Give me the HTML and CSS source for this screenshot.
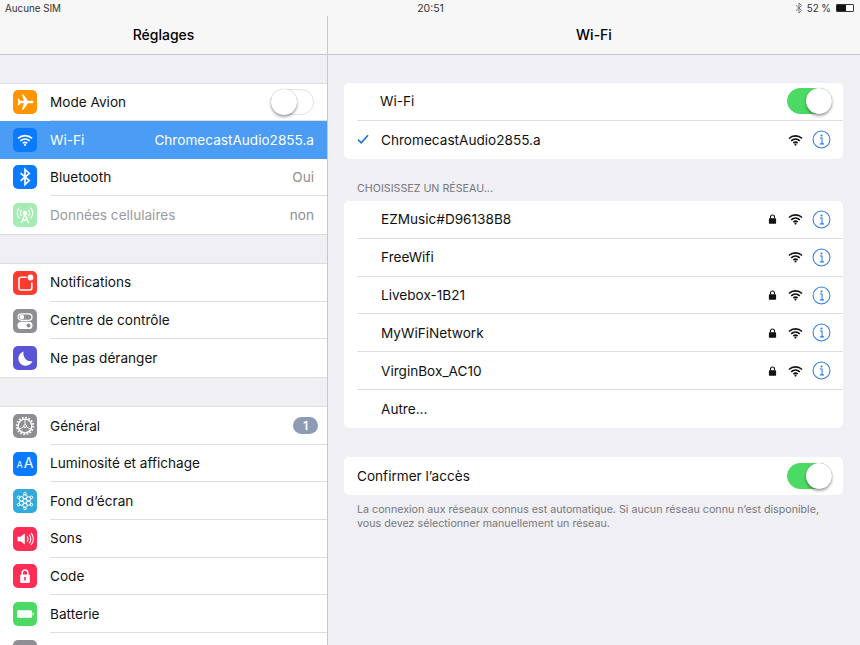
FILE: index.html
```html
<!DOCTYPE html>
<html lang="fr">
<head>
    <meta charset="UTF-8">
    <meta name="viewport" content="width=device-width, initial-scale=1.0">
    <title>Réglages</title>
    <link rel="stylesheet" href="styles.css">
</head>
<body>
    <svg class="defs" width="0" height="0">
        <symbol id="wifi" viewBox="0 0 16 12">
            <path d="M1 4.4C5 .7 11 .7 15 4.4M3.4 6.9c2.7-2.4 6.5-2.4 9.2 0M5.7 9.2c1.4-1.1 3.2-1.1 4.6 0" fill="none" stroke="currentColor" stroke-width="1.7"/>
            <circle cx="8" cy="10.9" r="1.1" fill="currentColor"/>
        </symbol>
        <symbol id="lock" viewBox="0 0 10 11">
            <path d="M2.8 5V3.2a2.2 2.2 0 0 1 4.4 0V5" fill="none" stroke="currentColor" stroke-width="1.2"/>
            <rect x="1" y="4.6" width="8" height="6.2" rx=".8" fill="currentColor"/>
        </symbol>
        <symbol id="info" viewBox="0 0 20 20">
            <circle cx="10" cy="10" r="8.9" fill="none" stroke="currentColor" stroke-width="1.1"/>
            <circle cx="10" cy="5.8" r="1.1" fill="currentColor"/>
            <path d="M8.3 8.5H10.6V14.3M8.3 14.6H12.6" fill="none" stroke="currentColor" stroke-width="1.1"/>
        </symbol>
    </svg>

    <div class="status">
        <span class="status-sim">Aucune SIM</span>
        <span class="status-time">20:51</span>
        <span class="status-right">
            <svg class="status-bt" viewBox="0 0 8 12"><path d="M1 3.3L6.6 8.4 4 11V1l2.6 2.6L1 8.7" fill="none" stroke="currentColor" stroke-width="1"/></svg>
            52 %
            <span class="battery"><span class="battery-fill"></span></span>
        </span>
    </div>

    <div class="panes">
        <aside class="sidebar">
            <header class="navbar">Réglages</header>

            <ul class="group">
                <li class="row">
                    <span class="icon orange">
                        <svg viewBox="0 0 24 24"><path d="M20.5 12c0-.9-1-1.3-2-1.3h-3.6L10.5 4.5H8.8l2.2 6.2H7.3L5.8 8.8H4.6l.8 3.2-.8 3.2h1.2l1.5-1.9H11l-2.2 6.2h1.7l4.4-6.2h3.6c1 0 2-.4 2-1.3z" fill="#fff"/></svg>
                    </span>
                    <div class="row-body">
                        <span class="label">Mode Avion</span>
                        <span class="toggle"><span class="knob"></span></span>
                    </div>
                </li>
                <li class="row selected">
                    <span class="icon blue">
                        <svg class="glyph-wifi" viewBox="0 0 16 12"><use href="#wifi"/></svg>
                    </span>
                    <div class="row-body">
                        <span class="label">Wi-Fi</span>
                        <span class="value">ChromecastAudio2855.a</span>
                    </div>
                </li>
                <li class="row">
                    <span class="icon blue">
                        <svg viewBox="0 0 24 24"><path d="M7.6 8.2L16.2 15.6 12 19.6V4.4L16.2 8.4 7.6 15.8" fill="none" stroke="#fff" stroke-width="1.7"/></svg>
                    </span>
                    <div class="row-body">
                        <span class="label">Bluetooth</span>
                        <span class="value">Oui</span>
                    </div>
                </li>
                <li class="row disabled">
                    <span class="icon lightgreen">
                        <svg viewBox="0 0 24 24" fill="none" stroke="#fff" stroke-width="1.2">
                            <circle cx="12" cy="10" r="1.6" fill="#fff"/>
                            <path d="M8.8 6.8a4.6 4.6 0 0 0 0 6.4M15.2 6.8a4.6 4.6 0 0 1 0 6.4M6.4 4.6a8 8 0 0 0 0 10.8M17.6 4.6a8 8 0 0 1 0 10.8"/>
                            <path d="M12 11L8.4 20M12 11l3.6 9M9.6 17h4.8" stroke-width="1.4"/>
                        </svg>
                    </span>
                    <div class="row-body">
                        <span class="label">Données cellulaires</span>
                        <span class="value">non</span>
                    </div>
                </li>
            </ul>

            <ul class="group">
                <li class="row">
                    <span class="icon red">
                        <svg viewBox="0 0 24 24"><path d="M13.5 6.2H8a2 2 0 0 0-2 2V17a2 2 0 0 0 2 2h8.800a2 2 0 0 0 2-2v-5.500" fill="none" stroke="#fff" stroke-width="1.6"/><circle cx="17.500" cy="6.500" r="2.900" fill="#fff"/></svg>
                    </span>
                    <div class="row-body"><span class="label">Notifications</span></div>
                </li>
                <li class="row">
                    <span class="icon grey">
                        <svg viewBox="0 0 24 24">
                            <rect x="5" y="4.800" width="14" height="6.600" rx="3.300" fill="none" stroke="#fff" stroke-width="1.200"/>
                            <circle cx="8.800" cy="8.100" r="2.400" fill="#fff"/>
                            <rect x="4.500" y="12.800" width="15" height="7.200" rx="3.600" fill="#fff"/>
                            <circle cx="15.500" cy="16.400" r="2" fill="#8e8e93"/>
                        </svg>
                    </span>
                    <div class="row-body"><span class="label">Centre de contrôle</span></div>
                </li>
                <li class="row">
                    <span class="icon indigo">
                        <svg viewBox="0 0 24 24"><path d="M10.600 5.600a7.200 7.200 0 1 0 8.800 9.300c-4.900 1.500-10.100-3.500-8.800-9.300z" fill="#fff"/></svg>
                    </span>
                    <div class="row-body"><span class="label">Ne pas déranger</span></div>
                </li>
            </ul>

            <ul class="group">
                <li class="row">
                    <span class="icon grey">
                        <svg viewBox="0 0 24 24" fill="none" stroke="#fff">
                            <circle cx="12" cy="12" r="8.200" stroke-width="2" stroke-dasharray="1.600 1.620"/>
                            <circle cx="12" cy="12" r="6.800" stroke-width="1.300"/>
                            <circle cx="12" cy="12" r="1.400" stroke-width="1"/>
                            <path d="M12 5.500v5M6.400 15.200l4.400-2.500M17.600 15.200l-4.400-2.500" stroke-width="1"/>
                        </svg>
                    </span>
                    <div class="row-body">
                        <span class="label">Général</span>
                        <span class="badge">1</span>
                    </div>
                </li>
                <li class="row">
                    <span class="icon blue icon-text"><small>A</small>A</span>
                    <div class="row-body"><span class="label">Luminosité et affichage</span></div>
                </li>
                <li class="row">
                    <span class="icon sky">
                        <svg viewBox="0 0 24 24" fill="none" stroke="#fff" stroke-width="1">
                            <circle cx="12" cy="12" r="2.200"/>
                            <circle cx="12" cy="7.800" r="2.200"/><circle cx="12" cy="16.200" r="2.200"/>
                            <circle cx="8.400" cy="9.900" r="2.200"/><circle cx="15.600" cy="9.900" r="2.200"/>
                            <circle cx="8.400" cy="14.100" r="2.200"/><circle cx="15.600" cy="14.100" r="2.200"/>
                            <circle cx="12" cy="4.600" r="1.300"/><circle cx="12" cy="19.400" r="1.300"/>
                            <circle cx="5.600" cy="8.300" r="1.300"/><circle cx="18.400" cy="8.300" r="1.300"/>
                            <circle cx="5.600" cy="15.700" r="1.300"/><circle cx="18.400" cy="15.700" r="1.300"/>
                        </svg>
                    </span>
                    <div class="row-body"><span class="label">Fond d’écran</span></div>
                </li>
                <li class="row">
                    <span class="icon rose">
                        <svg viewBox="0 0 24 24">
                            <path d="M4.500 9.800h3l4.300-3.300v11l-4.300-3.300h-3z" fill="#fff"/>
                            <path d="M14 9.500a3.500 3.500 0 0 1 0 5M16 7.700a6 6 0 0 1 0 8.600M18 6a8.600 8.600 0 0 1 0 12" fill="none" stroke="#fff" stroke-width="1.100"/>
                        </svg>
                    </span>
                    <div class="row-body"><span class="label">Sons</span></div>
                </li>
                <li class="row">
                    <span class="icon rose">
                        <svg viewBox="0 0 24 24">
                            <path d="M9.200 11V8.800a2.800 2.800 0 0 1 5.600 0V11" fill="none" stroke="#fff" stroke-width="1.500"/>
                            <rect x="7.200" y="10.600" width="9.600" height="8.400" rx="1" fill="#fff"/>
                            <rect x="11.200" y="13" width="1.600" height="3.400" fill="#ff2d55"/>
                        </svg>
                    </span>
                    <div class="row-body"><span class="label">Code</span></div>
                </li>
                <li class="row">
                    <span class="icon green">
                        <svg viewBox="0 0 24 24"><rect x="4" y="8.200" width="15" height="7.600" rx="1.200" fill="#fff"/><rect x="19.600" y="10.600" width="1.200" height="2.800" fill="#fff"/></svg>
                    </span>
                    <div class="row-body"><span class="label">Batterie</span></div>
                </li>
                <li class="row">
                    <span class="icon grey"></span>
                    <div class="row-body"></div>
                </li>
            </ul>
        </aside>

        <main class="content">
            <header class="navbar">Wi-Fi</header>

            <ul class="card card-top">
                <li class="net net-switch">
                    <div class="net-body">
                        <span class="net-name">Wi-Fi</span>
                        <span class="toggle on"><span class="knob"></span></span>
                    </div>
                </li>
                <li class="net">
                    <svg class="check" viewBox="0 0 12 10"><path d="M1 5.500L4.200 8.800 11 1.200" fill="none" stroke="currentColor" stroke-width="1.700"/></svg>
                    <div class="net-body">
                        <span class="net-name">ChromecastAudio2855.a</span>
                        <svg class="ic-wifi"><use href="#wifi"/></svg>
                        <svg class="ic-info"><use href="#info"/></svg>
                    </div>
                </li>
            </ul>

            <h2 class="section-title">CHOISISSEZ UN RÉSEAU...</h2>

            <ul class="card">
                <li class="net">
                    <div class="net-body">
                        <span class="net-name">EZMusic#D96138B8</span>
                        <svg class="ic-lock"><use href="#lock"/></svg>
                        <svg class="ic-wifi"><use href="#wifi"/></svg>
                        <svg class="ic-info"><use href="#info"/></svg>
                    </div>
                </li>
                <li class="net">
                    <div class="net-body">
                        <span class="net-name">FreeWifi</span>
                        <svg class="ic-wifi"><use href="#wifi"/></svg>
                        <svg class="ic-info"><use href="#info"/></svg>
                    </div>
                </li>
                <li class="net">
                    <div class="net-body">
                        <span class="net-name">Livebox-1B21</span>
                        <svg class="ic-lock"><use href="#lock"/></svg>
                        <svg class="ic-wifi"><use href="#wifi"/></svg>
                        <svg class="ic-info"><use href="#info"/></svg>
                    </div>
                </li>
                <li class="net">
                    <div class="net-body">
                        <span class="net-name">MyWiFiNetwork</span>
                        <svg class="ic-lock"><use href="#lock"/></svg>
                        <svg class="ic-wifi"><use href="#wifi"/></svg>
                        <svg class="ic-info"><use href="#info"/></svg>
                    </div>
                </li>
                <li class="net">
                    <div class="net-body">
                        <span class="net-name">VirginBox_AC10</span>
                        <svg class="ic-lock"><use href="#lock"/></svg>
                        <svg class="ic-wifi"><use href="#wifi"/></svg>
                        <svg class="ic-info"><use href="#info"/></svg>
                    </div>
                </li>
                <li class="net">
                    <div class="net-body">
                        <span class="net-name">Autre...</span>
                    </div>
                </li>
            </ul>

            <ul class="card card-confirm">
                <li class="net net-plain">
                    <div class="net-body">
                        <span class="net-name">Confirmer l’accès</span>
                        <span class="toggle on"><span class="knob"></span></span>
                    </div>
                </li>
            </ul>
            <p class="footnote">La connexion aux réseaux connus est automatique. Si aucun réseau connu n’est disponible, vous devez sélectionner manuellement un réseau.</p>
        </main>
    </div>
</body>
</html>
```

FILE: styles.css
```css
* {
    box-sizing: border-box;
}
html, body {
    height: 100%;
}
body {
    margin: 0;
    height: 645px;
    overflow: hidden;
    display: flex;
    flex-direction: column;
    font-family: Inter, "Liberation Sans", sans-serif;
    font-size: 13.6px;
    color: #111;
    background-color: #efeff4;
}
ul {
    list-style: none;
    margin: 0;
    padding: 0;
}
.defs {
    position: absolute;
}

/* status bar */
.status {
    flex: none;
    display: grid;
    grid-template-columns: 1fr auto 1fr;
    align-items: center;
    height: 16px;
    padding: 0 6px 0 5px;
    font-size: 9.8px;
    color: #333;
    background-color: #f7f7f8;
}
.status-time {
    margin-left: 2px;
    font-size: 10.5px;
}
.status-right {
    justify-self: end;
    display: flex;
    align-items: center;
    gap: 4px;
}
.status-bt {
    width: 8px;
    height: 12px;
    color: #777;
}
.battery {
    position: relative;
    width: 18px;
    height: 8px;
    margin-left: 1px;
    border: 1px solid #333;
    border-radius: 1px;
    background-color: #fff;
}
.battery-fill {
    display: block;
    width: 9px;
    height: 100%;
    background-color: #111;
}

/* panes */
.panes {
    flex: 1;
    min-height: 0;
    display: grid;
    grid-template-columns: 328px 1fr;
}
.sidebar {
    overflow: hidden;
    border-right: 1px solid #c8c7cc;
}
.content {
    overflow: hidden;
}
.navbar {
    height: 38.5px;
    display: flex;
    align-items: center;
    justify-content: center;
    font-size: 14px;
    font-weight: 500;
    color: #000;
    background-color: #f7f7f8;
    border-bottom: 1px solid #c8c7cc;
}

/* left list */
.group {
    margin-top: 28.3px;
    background-color: #fff;
    border-top: 1px solid #dcdce0;
    border-bottom: 1px solid #dcdce0;
}
.navbar + .group {
    margin-top: 28px;
}
.row {
    display: flex;
    align-items: center;
    gap: 13px;
    height: 37.6px;
    padding-left: 13px;
    background-color: #fff;
}
.row-body {
    flex: 1;
    height: 100%;
    display: flex;
    align-items: center;
    justify-content: space-between;
    padding-right: 13px;
    border-bottom: 1px solid #dedee2;
}
.row:last-child .row-body {
    border-bottom: none;
}
.row.selected {
    color: #fff;
    background-color: #4a9cf4;
}
.row.selected .row-body {
    border-bottom: none;
}
.row.selected .value {
    color: #fff;
}
.row.disabled .label {
    color: #9a9a9f;
}
.value {
    color: #8e8e93;
}
.badge {
    width: 25px;
    height: 17px;
    margin-right: -4px;
    display: flex;
    align-items: center;
    justify-content: center;
    font-size: 12px;
    font-weight: 600;
    color: #fff;
    background-color: #8e9bb5;
    border-radius: 9px;
}

/* app icons */
.icon {
    flex: none;
    width: 24px;
    height: 24px;
    display: flex;
    align-items: center;
    justify-content: center;
    border-radius: 5px;
}
.icon svg {
    width: 24px;
    height: 24px;
}
.icon .glyph-wifi {
    width: 16px;
    height: 12px;
    color: #fff;
}
.icon-text {
    align-items: baseline;
    padding-top: 2px;
    font-size: 14px;
    line-height: 18px;
    color: #fff;
}
.icon-text small {
    margin-right: 1px;
    font-size: 9px;
}
.orange { background-color: #ff9500; }
.blue { background-color: #0a7aff; }
.lightgreen { background-color: #a5ebb4; }
.red { background-color: #ff3b30; }
.grey { background-color: #8e8e93; }
.indigo { background-color: #5856d6; }
.sky { background-color: #34aadc; }
.rose { background-color: #ff2d55; }
.green { background-color: #4cd964; }

/* switch */
.toggle {
    flex: none;
    position: relative;
    width: 43px;
    height: 26px;
    background-color: #fff;
    border: 1px solid #e3e3e6;
    border-radius: 13px;
}
.knob {
    position: absolute;
    top: -1px;
    left: -1px;
    width: 26px;
    height: 26px;
    background-color: #fff;
    border-radius: 50%;
    box-shadow: 0 2px 3px rgba(0, 0, 0, 0.35), 0 0 1px rgba(0, 0, 0, 0.3);
}
.toggle.on {
    width: 45px;
    background-color: #4cd964;
    border-color: #4cd964;
}
.toggle.on .knob {
    left: auto;
    right: -1px;
}

/* right cards */
.card {
    margin: 0 17px 0 16px;
    background-color: #fff;
    border-radius: 5px;
}
.card-top {
    margin-top: 28.5px;
}
.net {
    position: relative;
    height: 37.8px;
    padding-left: 13px;
    display: flex;
    align-items: center;
}
.net-body {
    flex: 1;
    height: 100%;
    padding-left: 24px;
    padding-right: 11px;
    display: flex;
    align-items: center;
    border-bottom: 1px solid #dedee2;
}
.net:last-child .net-body {
    border-bottom: none;
}
.net-switch .net-body {
    padding-left: 23px;
}
.net-plain .net-body {
    padding-left: 0;
}
.net-name {
    flex: 1;
    color: #111;
}
.check {
    position: absolute;
    left: 13px;
    top: 13px;
    width: 12px;
    height: 10px;
    color: #1d76dc;
}
.ic-lock {
    width: 9px;
    height: 10px;
    margin-right: 11px;
    color: #111;
}
.ic-wifi {
    width: 15px;
    height: 12px;
    margin-right: 10px;
    color: #111;
}
.ic-info {
    width: 19px;
    height: 19px;
    margin-left: -1px;
    margin-right: 1px;
    color: #2b7de0;
}
.section-title {
    margin: 23px 0 6.5px 29px;
    font-size: 10.7px;
    line-height: 13px;
    font-weight: 400;
    color: #77777c;
}
.card-confirm {
    margin-top: 29px;
}
.footnote {
    margin: 8.5px 22px 0 29px;
    font-size: 10.7px;
    line-height: 14px;
    color: #77777c;
}
```
